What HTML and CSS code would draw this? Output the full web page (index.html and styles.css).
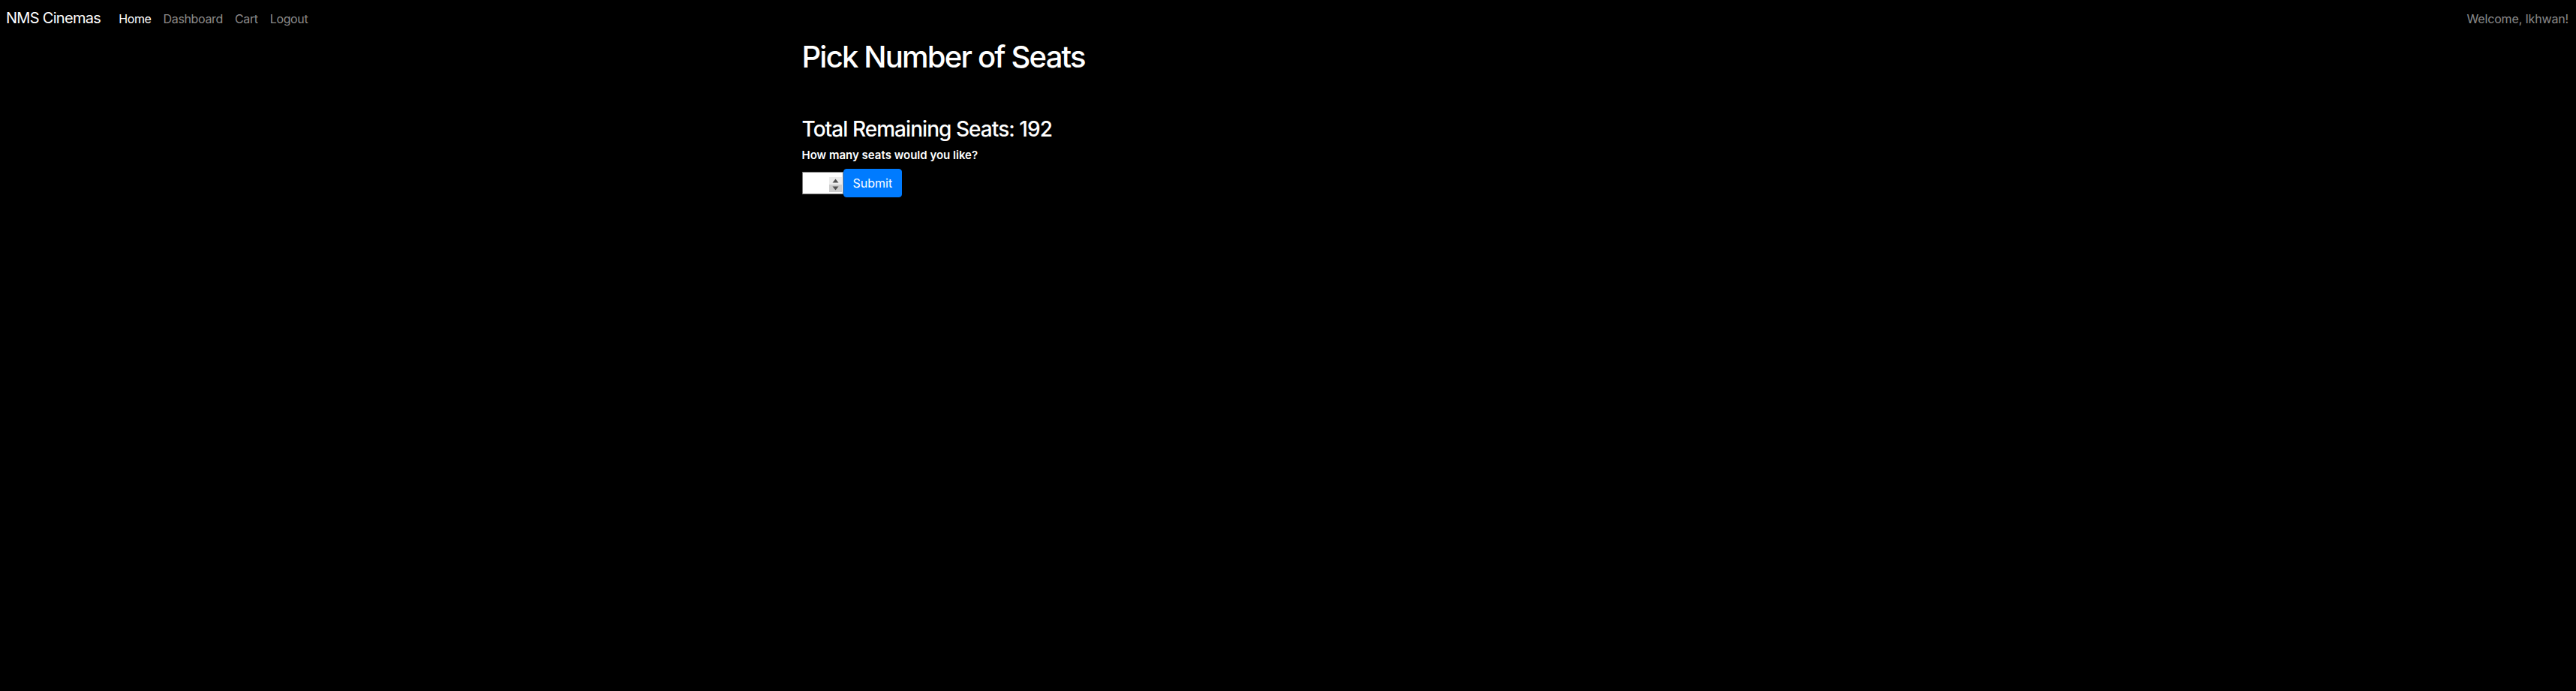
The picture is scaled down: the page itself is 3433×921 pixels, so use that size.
FILE: index.html
```html
<!DOCTYPE html>
<html lang="en">
<head>
<meta charset="utf-8">
<title>NMS Cinemas</title>
<link rel="stylesheet" href="styles.css">
</head>
<body>
<nav class="navbar">
  <a class="brand" href="#">NMS Cinemas</a>
  <ul class="nav-links">
    <li><a class="nav-link active" href="#">Home</a></li>
    <li><a class="nav-link" href="#">Dashboard</a></li>
    <li><a class="nav-link" href="#">Cart</a></li>
    <li><a class="nav-link" href="#">Logout</a></li>
  </ul>
  <span class="navbar-text">Welcome, Ikhwan!</span>
</nav>
<main class="container">
  <h1 class="title">Pick Number of Seats</h1>
  <h3 class="remaining">Total Remaining Seats: 192</h3>
  <form class="seat-form">
    <label class="form-label" for="seats">How many seats would you like?</label>
    <div class="form-row">
      <span class="input-wrap">
        <input class="seat-input" type="number" id="seats" min="1" max="192">
        <span class="spinner" aria-hidden="true">
          <span class="spin-up"><svg width="9" height="6" viewBox="0 0 9 6"><path d="M4.5 0.5 L8.5 5.5 L0.5 5.5 Z" fill="#505050"/></svg></span>
          <span class="spin-down"><svg width="9" height="6" viewBox="0 0 9 6"><path d="M0.5 0.5 L8.5 0.5 L4.5 5.5 Z" fill="#505050"/></svg></span>
        </span>
      </span>
      <button class="btn-primary" type="submit">Submit</button>
    </div>
  </form>
</main>
</body>
</html>
```
FILE: styles.css
```css
* { box-sizing: border-box; }
html, body {
  margin: 0;
  padding: 0;
  background: #000;
  color: #fff;
  font-family: Inter, "Liberation Sans", sans-serif;
  font-size: 16px;
  line-height: 1.5;
}
a { text-decoration: none; }

.navbar {
  display: flex;
  align-items: center;
  height: 48px;
  padding: 0 10px 0 8px;
}
.brand {
  color: #fff;
  font-size: 20px;
  letter-spacing: -0.035em;
  margin-right: 16px;
}
.nav-links {
  display: flex;
  list-style: none;
  margin: 0;
  padding: 0;
  flex: 1;
}
.nav-link {
  display: block;
  padding: 9px 8px 7px;
  color: rgba(255,255,255,0.55);
  letter-spacing: -0.022em;
}
.nav-link.active { color: #fff; }
.navbar-text {
  padding-top: 2px;
  color: rgba(255,255,255,0.55);
  letter-spacing: -0.01em;
}

.container {
  max-width: 1320px;
  margin: 0 auto;
  padding: 0 12px;
}
.title {
  font-size: 40px;
  font-weight: 500;
  line-height: 1.2;
  letter-spacing: -0.045em;
  margin: 4px 0 0;
}
.remaining {
  font-size: 28px;
  font-weight: 500;
  line-height: 1.2;
  letter-spacing: -0.034em;
  margin: 56px 0 0;
}
.form-label {
  display: block;
  font-size: 15px;
  font-weight: 600;
  margin: 6px 0 7px;
}
.form-row {
  display: flex;
  align-items: center;
}
.input-wrap {
  position: relative;
  display: block;
  width: 55px;
  height: 30px;
}
.seat-input {
  display: block;
  width: 55px;
  height: 30px;
  margin: 0;
  padding: 1px 2px;
  border: 1px solid #767676;
  border-radius: 0;
  background: #fff;
  font-size: 14px;
  -moz-appearance: textfield;
}
.seat-input::-webkit-inner-spin-button,
.seat-input::-webkit-outer-spin-button {
  -webkit-appearance: none;
  margin: 0;
}
.spinner {
  position: absolute;
  top: 7px;
  right: 2px;
  width: 17px;
  height: 20px;
  display: flex;
  flex-direction: column;
}
.spin-up, .spin-down {
  flex: 1;
  display: flex;
  align-items: center;
  justify-content: center;
}
.spin-up { background: #ececec; }
.spin-down { background: #cdcdcd; }
.btn-primary {
  height: 38px;
  padding: 6px 12px;
  border: 1px solid #007bff;
  border-radius: 4px;
  background: #007bff;
  color: #fff;
  font-family: inherit;
  font-size: 16px;
  line-height: 1.5;
}
```
